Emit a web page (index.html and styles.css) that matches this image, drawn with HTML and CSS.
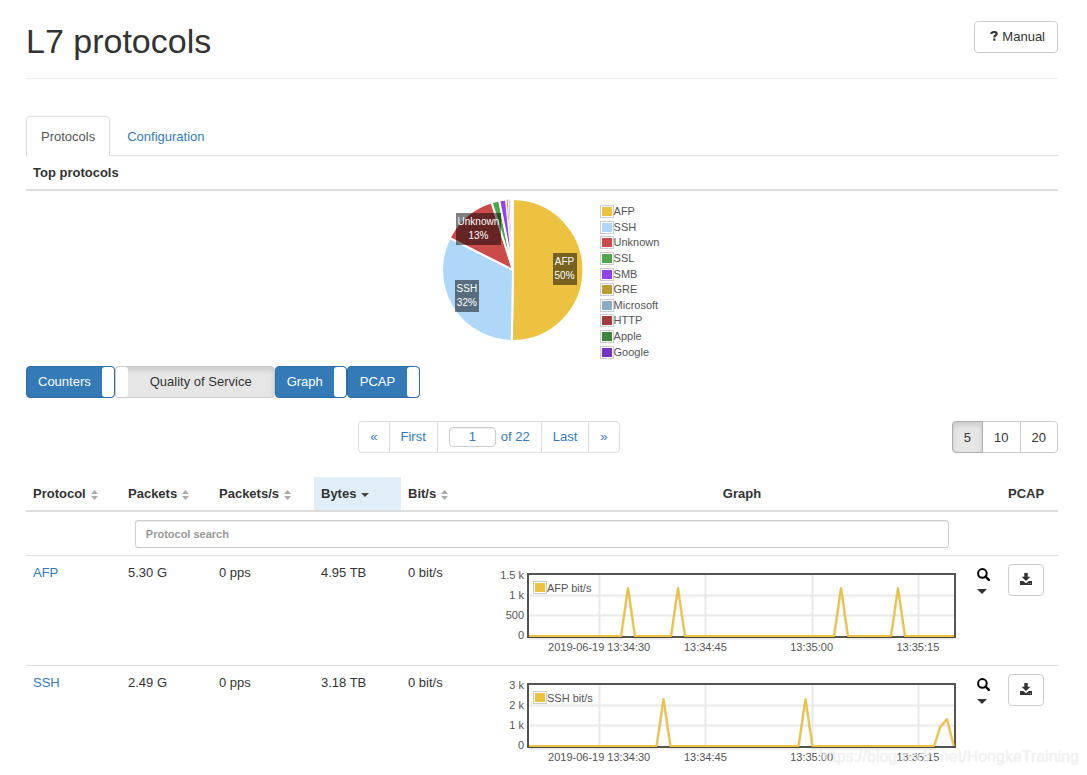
FILE: index.html
```html
<!DOCTYPE html>
<html lang="en">
<head>
<meta charset="utf-8">
<title>L7 protocols</title>
<link rel="stylesheet" href="styles.css">
</head>
<body>
<svg class="defs" aria-hidden="true">
  <symbol id="sort" viewBox="0 0 7 10"><path d="M3.5 0L7 4H0zM0 6h7L3.5 10z" fill="#aaa"/></symbol>
  <symbol id="search" viewBox="0 0 13 13"><circle cx="5.4" cy="5.4" r="4.3" fill="none" stroke="#000" stroke-width="2"/><path d="M8.5 8.500l3.300 3.300" stroke="#000" stroke-width="2.400" stroke-linecap="round"/></symbol>
  <symbol id="download" viewBox="0 0 12 12"><path d="M4.300 0h3.400v3.700h2.700L6 8 1.600 3.700h2.700z" fill="#333"/><path d="M0 8h3.200L6 10.200 8.800 8H12v4H0z" fill="#333"/><path d="M8.300 10.400h.800m.900 0h.800" stroke="#fff" stroke-width=".6"/></symbol>
</svg>
<main class="page">
  <header class="page-header">
    <h1 class="title">L7 protocols</h1>
    <button class="btn btn-manual" type="button"><svg class="question" viewBox="0 0 8 10"><path d="M1.200 3C1.300 1.600 2.500 1 4 1s2.700.8 2.700 2c0 1.500-2.400 1.500-2.400 3.400M4.300 7.500v2.200" fill="none" stroke="#333" stroke-width="2.100"/></svg>Manual</button>
  </header>

  <nav class="tabs">
    <a class="tab tab-active" href="#protocols">Protocols</a>
    <a class="tab" href="#configuration">Configuration</a>
  </nav>

  <h2 class="section-title">Top protocols</h2>
  <section class="overview">
    <div class="pie">
      <svg class="pie-svg" viewBox="0 0 140 140" stroke="#fff" stroke-width="2" stroke-linejoin="round">
        <path d="M70 70V-1A71 71 0 1 1 68.800 141z" fill="#edc240"/>
        <path d="M70 70L68.800 141A71 71 0 0 1 6.700 37.900z" fill="#afd8f8"/>
        <path d="M70 70L6.700 37.900A71 71 0 0 1 48.600 2.300z" fill="#cb4b4b"/>
        <path d="M70 70L48.600 2.300A71 71 0 0 1 56.200.4z" fill="#4da74d"/>
        <path d="M70 70L56.200.4A71 71 0 0 1 63-.6z" fill="#9440ed"/>
        <g stroke-width=".8">
          <path d="M70 70L63-.6A71 71 0 0 1 65.100-.8z" fill="#bd9b33"/>
          <path d="M70 70L65.100-.8A71 71 0 0 1 66.900-.9z" fill="#8cacc6"/>
          <path d="M70 70L66.900-.9A71 71 0 0 1 68-1z" fill="#ddd"/>
        </g>
      </svg>
      <span class="pie-label pie-unknown">Unknown<br>13%</span>
      <span class="pie-label pie-afp">AFP<br>50%</span>
      <span class="pie-label pie-ssh">SSH<br>32%</span>
    </div>
    <ul class="legend">
      <li><i class="swatch c-afp"></i>AFP</li>
      <li><i class="swatch c-ssh"></i>SSH</li>
      <li><i class="swatch c-unknown"></i>Unknown</li>
      <li><i class="swatch c-ssl"></i>SSL</li>
      <li><i class="swatch c-smb"></i>SMB</li>
      <li><i class="swatch c-gre"></i>GRE</li>
      <li><i class="swatch c-microsoft"></i>Microsoft</li>
      <li><i class="swatch c-http"></i>HTTP</li>
      <li><i class="swatch c-apple"></i>Apple</li>
      <li><i class="swatch c-google"></i>Google</li>
    </ul>
  </section>

  <div class="toggles">
    <label class="toggle toggle-on"><span class="toggle-text">Counters</span><input class="handle" type="checkbox" checked></label>
    <label class="toggle toggle-off"><input class="handle" type="checkbox"><span class="toggle-text">Quality of Service</span></label>
    <label class="toggle toggle-on"><span class="toggle-text">Graph</span><input class="handle" type="checkbox" checked></label>
    <label class="toggle toggle-on"><span class="toggle-text">PCAP</span><input class="handle" type="checkbox" checked></label>
  </div>

  <div class="paging">
    <div class="pager-area">
      <nav class="pager">
        <a class="page-link page-arrow" href="#prev">«</a>
        <a class="page-link" href="#first">First</a>
        <label class="page-link page-current"><input class="page-input" type="text" value="1" aria-label="Page">of 22</label>
        <a class="page-link" href="#last">Last</a>
        <a class="page-link page-arrow" href="#next">»</a>
      </nav>
    </div>
    <div class="sizes">
      <button class="size size-active" type="button">5</button>
      <button class="size" type="button">10</button>
      <button class="size" type="button">20</button>
    </div>
  </div>

  <table class="data">
    <colgroup><col class="w-protocol"><col class="w-packets"><col class="w-rate"><col class="w-bytes"><col class="w-bits"><col><col class="w-pcap"></colgroup>
    <thead>
      <tr class="heads">
        <th>Protocol<svg class="sort"><use href="#sort"/></svg></th>
        <th>Packets<svg class="sort"><use href="#sort"/></svg></th>
        <th>Packets/s<svg class="sort"><use href="#sort"/></svg></th>
        <th class="sorted">Bytes<i class="caret"></i></th>
        <th>Bit/s<svg class="sort"><use href="#sort"/></svg></th>
        <th class="center">Graph</th>
        <th>PCAP</th>
      </tr>
      <tr class="search-row">
        <th colspan="7"><input class="search" type="text" placeholder="Protocol search" aria-label="Protocol search"></th>
      </tr>
    </thead>
    <tbody>
      <tr>
        <td><a class="link" href="#afp">AFP</a></td>
        <td>5.30 G</td>
        <td>0 pps</td>
        <td>4.95 TB</td>
        <td>0 bit/s</td>
        <td>
          <div class="graph-cell">
            <div class="chart">
              <div class="y-axis"><span>1.5 k</span><span>1 k</span><span>500</span><span>0</span></div>
              <div class="plot">
                <svg class="plot-svg" viewBox="0 0 429 65" preserveAspectRatio="none">
                  <path class="grid" d="M72.500 0V65M178.500 0V65M285.500 0V65M391.500 0V65M0 22.500H429M0 42.500H429"/>
                  <rect class="frame" x="1" y="1" width="427" height="63"/>
                  <path class="shade" d="M2 65H94L101 16L108 65H144L151 16L158 65H307L314 16L321 65H364L371 16L378 65H427"/>
                  <path class="line" d="M2 63H94L101 15L108 63H144L151 15L158 63H307L314 15L321 63H364L371 15L378 63H427"/>
                </svg>
                <span class="series"><i class="swatch c-afp"></i>AFP bit/s</span>
              </div>
              <div class="x-axis"><span>2019-06-19 13:34:30</span><span>13:34:45</span><span>13:35:00</span><span>13:35:15</span></div>
            </div>
            <div class="tools">
              <button class="icon-btn" type="button" aria-label="Zoom"><svg class="icon-search"><use href="#search"/></svg></button>
              <button class="icon-btn" type="button" aria-label="More"><i class="caret caret-big"></i></button>
            </div>
          </div>
        </td>
        <td><button class="btn btn-download" type="button" aria-label="Download PCAP"><svg class="icon-download"><use href="#download"/></svg></button></td>
      </tr>
      <tr>
        <td><a class="link" href="#ssh">SSH</a></td>
        <td>2.49 G</td>
        <td>0 pps</td>
        <td>3.18 TB</td>
        <td>0 bit/s</td>
        <td>
          <div class="graph-cell">
            <div class="chart">
              <div class="y-axis"><span>3 k</span><span>2 k</span><span>1 k</span><span>0</span></div>
              <div class="plot">
                <svg class="plot-svg" viewBox="0 0 429 65" preserveAspectRatio="none">
                  <path class="grid" d="M72.500 0V65M178.500 0V65M285.500 0V65M391.500 0V65M0 22.500H429M0 42.500H429"/>
                  <rect class="frame" x="1" y="1" width="427" height="63"/>
                  <path class="shade" d="M2 65H129.500L136.500 17L143.500 65H271.500L278.500 17L285.500 65H407L413 45L420 37L427 65"/>
                  <path class="line" d="M2 63H129.500L136.500 16L143.500 63H271.500L278.500 16L285.500 63H407L413 44L420 36L427 63"/>
                </svg>
                <span class="series"><i class="swatch c-afp"></i>SSH bit/s</span>
              </div>
              <div class="x-axis"><span>2019-06-19 13:34:30</span><span>13:34:45</span><span>13:35:00</span><span>13:35:15</span></div>
            </div>
            <div class="tools">
              <button class="icon-btn" type="button" aria-label="Zoom"><svg class="icon-search"><use href="#search"/></svg></button>
              <button class="icon-btn" type="button" aria-label="More"><i class="caret caret-big"></i></button>
            </div>
          </div>
        </td>
        <td><button class="btn btn-download" type="button" aria-label="Download PCAP"><svg class="icon-download"><use href="#download"/></svg></button></td>
      </tr>
    </tbody>
  </table>
</main>
<div class="watermark">https://blog.csdn.net/HongkeTraining</div>
</body>
</html>
```
FILE: styles.css
```css
* { box-sizing: border-box; }
body {
  margin: 0;
  background: #fff;
  color: #333;
  font: 13px/19px "Liberation Sans", Arial, sans-serif;
}
button, input { font: inherit; color: inherit; margin: 0; }
a { text-decoration: none; }
.defs { display: none; }
.page { padding: 21px 29px 0 26px; }

.page-header {
  display: flex;
  justify-content: space-between;
  align-items: flex-start;
  padding-bottom: 17px;
  border-bottom: 1px solid #eee;
}
.title { margin: 0; font-size: 34px; line-height: 40px; font-weight: 400; }
.btn {
  display: flex;
  align-items: center;
  justify-content: center;
  height: 32px;
  padding: 0 12px;
  background: #fff;
  border: 1px solid #ccc;
  border-radius: 4px;
}
.btn-manual { padding-left: 15px; padding-bottom: 2px; }
.question { width: 8px; height: 10px; margin-right: 4px; }

.tabs {
  display: flex;
  gap: 2px;
  margin-top: 37px;
  border-bottom: 1px solid #ddd;
}
.tab {
  padding: 10px 14px 9px;
  margin-bottom: -1px;
  border: 1px solid transparent;
  border-radius: 4px 4px 0 0;
  color: #337ab7;
}
.tab-active { color: #555; border-color: #ddd; border-bottom-color: #fff; }

.section-title {
  margin: 0;
  padding: 7px;
  border-bottom: 2px solid #ddd;
  font-size: 13px;
  line-height: 19px;
}
.overview {
  display: flex;
  justify-content: center;
  gap: 17px;
  height: 175px;
  padding: 8px 0 0 18px;
}
.pie { position: relative; width: 140px; height: 142px; }
.pie-svg { display: block; width: 140px; height: 142px; overflow: visible; }
.pie-label {
  position: absolute;
  padding: 2px;
  background: rgba(0, 0, 0, .5);
  color: #fff;
  font-size: 10px;
  line-height: 14px;
  text-align: center;
}
.pie-unknown { left: 13px; top: 14px; }
.pie-afp { right: 6px; top: 54px; }
.pie-ssh { left: 12px; top: 81px; }
.legend {
  display: flex;
  flex-direction: column;
  height: 156px;
  margin: 5px 0 0;
  padding: 0;
  list-style: none;
  color: #545454;
  font-size: 11px;
}
.legend li { flex: 1; display: flex; align-items: center; line-height: 15px; }
.swatch {
  width: 14px;
  height: 13px;
  padding: 1px;
  border: 1px solid #ccc;
  background-clip: content-box;
}
.c-afp { background-color: #edc240; }
.c-ssh { background-color: #afd8f8; }
.c-unknown { background-color: #cb4b4b; }
.c-ssl { background-color: #4da74d; }
.c-smb { background-color: #9440ed; }
.c-gre { background-color: #bd9b33; }
.c-microsoft { background-color: #8cacc6; }
.c-http { background-color: #a23c3c; }
.c-apple { background-color: #3d853d; }
.c-google { background-color: #7633bd; }

.toggles { display: flex; }
.toggle {
  display: flex;
  height: 32px;
  border: 1px solid #ccc;
  border-radius: 4px;
  overflow: hidden;
}
.toggle-text { padding: 5px 12px; }
.toggle-on { background: #337ab7; border-color: #2e6da4; color: #fff; }
.toggle-on .toggle-text { padding: 5px 11px; }
.toggle-on:last-child .toggle-text { padding: 5px 12px; }
.toggle-off { background: #e6e6e6; box-shadow: inset 0 3px 5px rgba(0, 0, 0, .125); }
.toggle-off .toggle-text { padding: 5px 22px; }
.handle { appearance: none; width: 12px; background: #fff; border-radius: 3px; }

.paging { display: flex; margin: 23px 0 24px; }
.pager-area { flex: 1; display: flex; justify-content: center; }
.pager { display: flex; border: 1px solid #ddd; border-radius: 4px; }
.page-link { padding: 5px 11px; height: 30px; line-height: 20px; color: #337ab7; border-left: 1px solid #ddd; }
.page-link:first-child { border-left: 0; }
.page-current { display: flex; align-items: center; gap: 5px; }
.page-input {
  width: 47px;
  height: 20px;
  padding: 0;
  border: 1px solid #ccc;
  border-radius: 4px;
  text-align: center;
  box-shadow: inset 0 1px 1px rgba(0, 0, 0, .075);
}
.sizes { display: flex; }
.size {
  height: 32px;
  margin-left: -1px;
  padding: 0 11px;
  background: #fff;
  border: 1px solid #ccc;
}
.size:first-child { border-radius: 4px 0 0 4px; margin-left: 0; }
.size:last-child { border-radius: 0 4px 4px 0; }
.size-active { position: relative; background: #e6e6e6; border-color: #adadad; box-shadow: inset 0 3px 5px rgba(0, 0, 0, .125); }

.data { width: 100%; table-layout: fixed; border-spacing: 0; }
.w-protocol { width: 95px; }
.w-packets { width: 91px; }
.w-rate { width: 102px; }
.w-bytes { width: 87px; }
.w-bits { width: 82px; }
.w-pcap { width: 57px; }
.data th, .data td { padding: 7px; text-align: left; vertical-align: top; white-space: nowrap; }
.data .heads th { border-bottom: 2px solid #ddd; }
.data .heads .center { text-align: center; }
.sorted { background: #e1eef7; }
.sort { width: 7px; height: 10px; margin-left: 5px; vertical-align: -2px; }
.caret {
  display: inline-block;
  width: 0;
  height: 0;
  margin-left: 5px;
  border: 4px solid transparent;
  border-top-color: #444;
  border-bottom: 0;
  vertical-align: middle;
}
.caret-big { display: block; margin: 0; border-width: 5px 5px 0; border-top-color: #333; }
.data .search-row th { padding: 8px 7px 7px; text-align: center; }
.search {
  display: block;
  width: 80%;
  height: 28px;
  margin: 0 auto;
  padding: 0 10px;
  border: 1px solid #ccc;
  border-radius: 3px;
  font-size: 11px;
  font-weight: 700;
  box-shadow: inset 0 1px 1px rgba(0, 0, 0, .075);
}
.search::placeholder { color: #999; }
.data td { height: 110px; border-top: 1px solid #ddd; }
.link { color: #337ab7; }

.graph-cell { display: flex; gap: 21px; padding-right: 4px; }
.chart {
  flex: 1;
  display: grid;
  grid-template-columns: 34px 1fr;
  column-gap: 3px;
  padding-top: 6px;
  color: #545454;
  font-size: 11px;
  line-height: 12px;
}
.y-axis { display: flex; flex-direction: column; justify-content: space-between; height: 72px; text-align: right; }
.plot { position: relative; height: 65px; margin-top: 4px; }
.plot-svg { display: block; width: 100%; height: 65px; overflow: visible; fill: none; }
.grid { stroke: rgba(84, 84, 84, .13); stroke-width: 2; }
.frame { stroke: #545454; stroke-width: 2; }
.shade { stroke: rgba(0, 0, 0, .1); stroke-width: 3; stroke-linejoin: round; }
.line { stroke: #edc240; stroke-width: 2; stroke-linejoin: round; }
.series { position: absolute; left: 6px; top: 8px; display: flex; align-items: center; background: #fff; }
.x-axis { grid-column: 2; display: flex; margin: 0 -15px 0 19px; }
.x-axis span { flex: 1 0 0; display: flex; justify-content: center; min-width: 0; }
.tools { display: flex; flex-direction: column; gap: 8px; width: 13px; padding-top: 5px; }
.icon-btn { padding: 0; border: 0; background: none; }
.icon-search { display: block; width: 13px; height: 13px; }
.btn-download { width: 36px; padding: 0 0 2px; margin-top: 1px; }
.icon-download { width: 12px; height: 12px; }

.watermark {
  position: fixed;
  right: 8px;
  bottom: 9px;
  color: rgba(255, 255, 255, .7);
  font-size: 16px;
  line-height: 18px;
  text-shadow: 0 0 1px rgba(120, 120, 120, .35);
  pointer-events: none;
}
```
